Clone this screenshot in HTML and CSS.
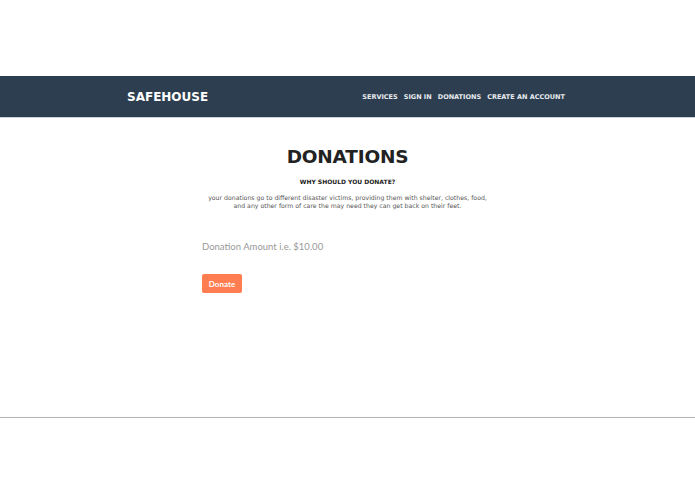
FILE: index.html
```html
<!DOCTYPE html>
<html>
<head>
<meta charset="utf-8">
<link rel="stylesheet" href="styles.css">
</head>
<body>
<div class="page">
  <header class="navbar">
    <div class="nav-inner">
      <div class="brand">SAFEHOUSE</div>
      <nav class="links">
        <a>SERVICES</a>
        <a>SIGN IN</a>
        <a>DONATIONS</a>
        <a>CREATE AN ACCOUNT</a>
      </nav>
    </div>
  </header>
  <main class="content">
    <h1 class="title">DONATIONS</h1>
    <h2 class="subtitle">WHY SHOULD YOU DONATE?</h2>
    <p class="desc">your donations go to different disaster victims, providing them with shelter, clothes, food,<br>and any other form of care the may need they can get back on their feet.</p>
    <form class="form">
      <input class="amount" type="text" placeholder="Donation Amount i.e. $10.00">
      <button class="donate" type="button">Donate</button>
    </form>
  </main>
  <div class="rule"></div>
</div>
</body>
</html>
```
FILE: styles.css
```css
html, body {
  margin: 0;
  padding: 0;
  background: #ffffff;
}
.page {
  width: 695px;
  height: 494px;
  padding-top: 76px;
  box-sizing: border-box;
  display: flex;
  flex-direction: column;
}
.navbar {
  height: 42px;
  background: #2d3e50;
  border-bottom: 1px solid #c9d2db;
  box-sizing: border-box;
}
.nav-inner {
  height: 100%;
  display: flex;
  align-items: center;
  justify-content: space-between;
  padding: 0 130px 0 127px;
}
.brand {
  font-family: "DejaVu Sans", sans-serif;
  font-weight: bold;
  font-size: 12px;
  color: #ffffff;
  margin-top: 1px;
}
.links {
  display: flex;
  gap: 6px;
  margin-top: 1px;
}
.links a {
  font-family: "DejaVu Sans", sans-serif;
  font-weight: bold;
  font-size: 6.5px;
  color: #e6eaee;
}
.content {
  height: 299px;
  display: flex;
  flex-direction: column;
  align-items: center;
}
.title {
  font-family: "DejaVu Sans", sans-serif;
  font-weight: bold;
  font-size: 18.5px;
  letter-spacing: -0.2px;
  color: #222222;
  margin: 28px 0 0;
  line-height: 22px;
}
.subtitle {
  font-family: "DejaVu Sans", sans-serif;
  font-weight: bold;
  font-size: 6px;
  color: #222222;
  margin: 10px 0 0;
  line-height: 8px;
}
.desc {
  font-family: "DejaVu Sans", sans-serif;
  font-size: 6.2px;
  color: #555555;
  text-align: center;
  line-height: 8px;
  margin: 8px 0 0;
}
.form {
  width: 291px;
  display: flex;
  flex-direction: column;
  align-items: flex-start;
  margin-top: 29px;
}
.amount {
  border: none;
  outline: none;
  padding: 0;
  width: 100%;
  height: 14px;
  font-family: "Lato", sans-serif;
  font-size: 9.5px;
  color: #555;
  background: transparent;
}
.amount::placeholder {
  color: #999999;
}
.donate {
  margin-top: 21px;
  width: 40px;
  height: 19px;
  border: none;
  border-radius: 2px;
  background: #ff7d50;
  color: #ffffff;
  font-family: "Lato", sans-serif;
  font-weight: bold;
  font-size: 8px;
  padding: 0;
}
.rule {
  height: 1px;
  background: #b4b4b4;
}
```
